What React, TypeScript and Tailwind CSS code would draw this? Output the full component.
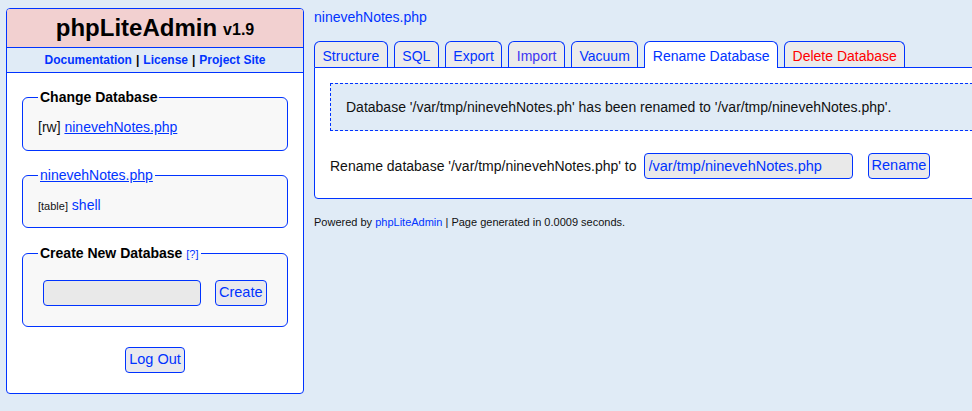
import React from "react";

const BLUE = "text-[#0033ff]";

function Sidebar() {
  return (
    <div className="w-[298px] h-[386px] shrink-0 border border-[#0033ff] rounded-[4px] bg-white overflow-hidden">
      <div className="h-[39px] bg-[#f2d0d0] border-b border-[#0033ff] flex items-center justify-center">
        <span className="text-[24px] font-bold text-black leading-none">phpLiteAdmin</span>
        <span className="text-[16px] font-bold text-black ml-[6px] leading-none mt-[4px]">v1.9</span>
      </div>
      <div className="h-[25px] bg-[#e0ebf6] border-b border-[#0033ff] flex items-center justify-center text-[12px] font-bold">
        <a className={BLUE}>Documentation</a>
        <span className="mx-[4px] text-black">|</span>
        <a className={BLUE}>License</a>
        <span className="mx-[4px] text-black">|</span>
        <a className={BLUE}>Project Site</a>
      </div>
      <div className="px-[15px] pt-[16px]">
        <fieldset className="border border-[#0033ff] rounded-[6px] bg-[#f8f8f8] px-[15px] pt-[14px] pb-[15px]">
          <legend className="px-[2px] text-[14px] font-bold text-black leading-4">Change Database</legend>
          <div className="text-[14px] leading-4 text-[#111]">
            [rw] <a className={`${BLUE} underline`}>ninevehNotes.php</a>
          </div>
        </fieldset>
        <fieldset className="mt-[16px] border border-[#0033ff] rounded-[6px] bg-[#f8f8f8] px-[15px] pt-[14px] pb-[13px]">
          <legend className="px-[2px] text-[14px] text-black leading-4">
            <a className={`${BLUE} underline`}>ninevehNotes.php</a>
          </legend>
          <div className="text-[14px] leading-4 text-[#111]">
            <span className="text-[11px]">[table]</span> <a className={BLUE}>shell</a>
          </div>
        </fieldset>
        <fieldset className="mt-[17px] border border-[#0033ff] rounded-[6px] bg-[#f8f8f8] px-[15px] pt-[18px] pb-[20px]">
          <legend className="px-[2px] text-[14px] font-bold text-black leading-4">
            Create New Database <a className={`${BLUE} text-[11px] font-normal`}>[?]</a>
          </legend>
          <div className="flex items-center">
            <input className="ml-[5px] w-[158px] h-[26px] bg-[#e9e9e9] border border-[#0033ff] rounded-[4px] outline-none" />
            <button className={`ml-[14px] h-[26px] px-[3px] bg-[#e9e9ed] border border-[#0033ff] rounded-[4px] text-[14.5px] ${BLUE}`}>Create</button>
          </div>
        </fieldset>
        <div className="flex justify-center mt-[20px]">
          <button className={`h-[26px] px-[3px] bg-[#e9e9ed] border border-[#0033ff] rounded-[4px] text-[14.5px] ${BLUE}`}>Log Out</button>
        </div>
      </div>
    </div>
  );
}

const tabs = [
  { name: "Structure" },
  { name: "SQL" },
  { name: "Export" },
  { name: "Import", color: "text-[#3d36f2]" },
  { name: "Vacuum" },
  { name: "Rename Database", active: true },
  { name: "Delete Database", color: "text-[#ff0000]" },
];

function Main() {
  return (
    <div className="ml-[10px] w-[700px] shrink-0">
      <div className="h-[18px] flex items-center">
        <a className={`text-[14px] ${BLUE}`}>ninevehNotes.php</a>
      </div>
      <div className="flex items-start gap-[6px] mt-[15px] h-[26px] relative z-10">
        {tabs.map((t) => (
          <div
            key={t.name}
            className={`px-[7.5px] border border-b-0 border-[#0033ff] rounded-t-[6px] flex items-start pt-[4px] text-[14px] ${
              t.active ? "bg-white h-[27px]" : "bg-[#ebebeb] h-[26px]"
            } ${t.color ?? BLUE}`}
          >
            {t.name}
          </div>
        ))}
      </div>
      <div className="border border-[#0033ff] rounded-bl-[4px] bg-white px-[15px] pt-[15px] pb-[19px]">
        <div className="border border-dashed border-[#0033ff] bg-[#e0ebf6] px-[15px] py-[15px] text-[14px] leading-4 text-[#111]">
          Database '/var/tmp/ninevehNotes.ph' has been renamed to '/var/tmp/ninevehNotes.php'.
        </div>
        <div className="mt-[22px] flex items-center text-[14px] text-[#111]">
          <span>Rename database '/var/tmp/ninevehNotes.php' to</span>
          <input
            defaultValue="/var/tmp/ninevehNotes.php"
            className={`ml-[7px] w-[209px] h-[26px] px-[4px] bg-[#e9e9e9] border border-[#0033ff] rounded-[4px] outline-none text-[14.5px] ${BLUE}`}
          />
          <button className={`ml-[15px] h-[26px] px-[3px] bg-[#e9e9ed] border border-[#0033ff] rounded-[4px] text-[14.5px] ${BLUE}`}>Rename</button>
        </div>
      </div>
      <div className="mt-[15px] text-[11px] text-[#111]">
        Powered by <a className={BLUE}>phpLiteAdmin</a> | Page generated in 0.0009 seconds.
      </div>
    </div>
  );
}

export default function App() {
  return (
    <div className="w-[972px] h-[411px] overflow-hidden bg-[#e0ebf6] flex pl-[6px] pt-[8px] font-['Liberation_Sans',Arial,sans-serif]">
      <Sidebar />
      <Main />
    </div>
  );
}
